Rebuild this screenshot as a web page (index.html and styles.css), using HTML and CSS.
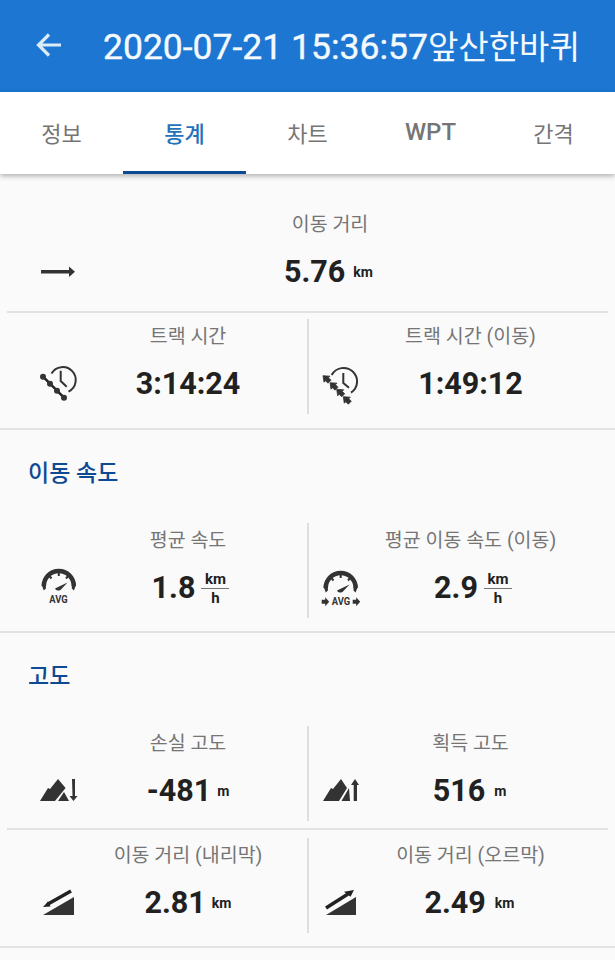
FILE: index.html
```html
<!DOCTYPE html>
<html lang="ko">
<head>
  <meta charset="UTF-8" />
  <meta name="viewport" content="width=device-width, initial-scale=1.0" />
  <title>통계</title>
  <link rel="stylesheet" href="styles.css">
</head>
<body>
  <!-- App Bar -->
  <header class="app-bar">
    <svg class="back-icon" width="30" height="30" viewBox="0 0 30 30"><path d="M27 15H5M15 4.500L4.500 15L15 25.500" fill="none" stroke="#dcebf9" stroke-width="3.200"/></svg>
    <h1>2020-07-21 15:36:57<span class="title-name">앞산한바퀴</span></h1>
  </header>

  <!-- Tabs -->
  <nav class="tabs">
    <div class="tab">정보</div>
    <div class="tab active">통계</div>
    <div class="tab">차트</div>
    <div class="tab tab-latin">WPT</div>
    <div class="tab">간격</div>
  </nav>

  <main>
    <div class="row-single">
      <div class="cell cell-wide">
        <svg class="icon" width="36" height="36" viewBox="0 0 36 36"><rect x="1" y="17" width="29" height="3.500"/><path d="M29 13.500l6 5.250-6 5.250z"/></svg>
        <div class="stat">
          <div class="label">이동 거리</div>
          <div class="value">5.76<span class="unit">km</span></div>
        </div>
      </div>
    </div>
    <div class="line inset"></div>

    <div class="row first">
      <div class="cell cell-left">
        <svg class="icon" width="36" height="36" viewBox="0 0 36 36">
          <g transform="translate(0 1)">
            <path d="M11.500 7.500A13 13 0 1 1 28.500 25.700" fill="none" stroke="#333" stroke-width="2"/>
            <path d="M20.700 4.700V15l6 5.700" fill="none" stroke="#333" stroke-width="2"/>
            <path d="M3 10.700L24 31.700" stroke="#222" stroke-width="2.500"/>
            <circle cx="3" cy="10.700" r="3"/><circle cx="10" cy="17.700" r="3"/><circle cx="17" cy="24.700" r="3"/><circle cx="24" cy="31.700" r="3"/>
          </g>
        </svg>
        <div class="stat">
          <div class="label">트랙 시간</div>
          <div class="value">3:14:24</div>
        </div>
      </div>
      <div class="cell cell-right">
        <svg class="icon" width="36" height="36" viewBox="0 0 36 36">
          <g transform="translate(0 1)">
            <path d="M8.700 9A13.500 13.500 0 1 1 28 26.700" fill="none" stroke="#333" stroke-width="2"/>
            <path d="M20.300 7V17l5.700 4.700" fill="none" stroke="#333" stroke-width="2"/>
            <g stroke="#333" stroke-width=".8">
              <path d="M0 9.700l7 .5-1.500 1.500 2.500 2.500-3 3-2.500-2.500-1.500 1.500z"/>
              <path d="M7 16.700l7 .5-1.500 1.500 2.500 2.500-3 3-2.500-2.500-1.500 1.500z"/>
              <path d="M13.700 23.300l7 .5-1.500 1.500 2.500 2.500-3 3-2.500-2.500-1.500 1.500z"/>
              <path d="M20.300 30.700l7 .5-1.500 1.500 2.500 2.500-3 3-2.500-2.500-1.500 1.500z"/>
            </g>
          </g>
        </svg>
        <div class="stat">
          <div class="label">트랙 시간 (이동)</div>
          <div class="value">1:49:12</div>
        </div>
      </div>
    </div>
    <div class="line section-end"></div>

    <h2>이동 속도</h2>
    <div class="row">
      <div class="cell cell-left">
        <svg class="icon" width="36" height="36" viewBox="0 0 36 36">
          <path d="M3.800 17A15 15 0 0 1 33.800 17" fill="none" stroke="#333" stroke-width="4.500"/>
          <path d="M1.700 16h4.200v3.500l-2.100 2zM36 16h-4.200v3.500l2.100 2z"/>
          <path d="M15 19.500l12.500-6-7 7.500q-4.500 1.500-5.500-1.500z"/>
          <path d="M18.800 3v4M9 6.500l2.500 3M28.500 6.500l-2.500 3" stroke="#333" stroke-width="2"/>
          <text class="avg" x="18.500" y="34" text-anchor="middle" textLength="18.400" lengthAdjust="spacingAndGlyphs">AVG</text>
        </svg>
        <div class="stat">
          <div class="label">평균 속도</div>
          <div class="value with-fraction">1.8<span class="fraction"><span>km</span><span class="den">h</span></span></div>
        </div>
      </div>
      <div class="cell cell-right">
        <svg class="icon" width="36" height="36" viewBox="0 0 36 36">
          <path d="M2.700 19A15 15 0 0 1 32.700 19" fill="none" stroke="#333" stroke-width="4.500"/>
          <path d="M.700 18h4.200v3.500l-2.100 2zM34.700 18h-4.200v3.500l2.100 2z"/>
          <path d="M14 21.500l12.500-6-7 7.500q-4.500 1.500-5.500-1.500z"/>
          <path d="M17.700 5v4M8 8.500l2.500 3M27.500 8.500l-2.500 3" stroke="#333" stroke-width="2"/>
          <path d="M-1.300 30.700h3.500v-2.500l4 4.500-4 4.500v-2.500h-3.500zM29.700 30.700h3.500v-2.500l4 4.500-4 4.500v-2.500h-3.500z"/>
          <text class="avg" x="18" y="36" text-anchor="middle" textLength="18.400" lengthAdjust="spacingAndGlyphs">AVG</text>
        </svg>
        <div class="stat">
          <div class="label">평균 이동 속도 (이동)</div>
          <div class="value with-fraction">2.9<span class="fraction"><span>km</span><span class="den">h</span></span></div>
        </div>
      </div>
    </div>
    <div class="line section-end"></div>

    <h2>고도</h2>
    <div class="row">
      <div class="cell cell-left">
        <svg class="icon" width="36" height="36" viewBox="0 0 36 36">
          <g transform="translate(0 2)">
            <path d="M0 27l8-13 2 1 8-10 7.600 9-10.600 13z"/>
            <path d="M18 27l6-9 5 9z"/>
            <path d="M32 5h3v17h2.500l-4 5-4-5h3z"/>
          </g>
        </svg>
        <div class="stat">
          <div class="label">손실 고도</div>
          <div class="value">-481<span class="unit">m</span></div>
        </div>
      </div>
      <div class="cell cell-right">
        <svg class="icon" width="36" height="36" viewBox="0 0 36 36">
          <g transform="translate(0 2)">
            <path d="M0 27l8-13 2 1 8-10 6 9-8 13z"/>
            <path d="M26 14l1 13h-8.500z"/>
            <path d="M30.700 27V11H28l4-6 4 6h-2v16z"/>
          </g>
        </svg>
        <div class="stat">
          <div class="label">획득 고도</div>
          <div class="value">516<span class="unit">m</span></div>
        </div>
      </div>
    </div>
    <div class="line inset split"></div>

    <div class="row">
      <div class="cell cell-left">
        <svg class="icon" width="36" height="36" viewBox="0 0 36 36">
          <path d="M3 31l31-18v18z"/>
          <path d="M31 7L8 20" fill="none" stroke="#222" stroke-width="3.500"/>
          <path d="M3 23l5-5.500 2.500 5z" fill="#222"/>
        </svg>
        <div class="stat">
          <div class="label">이동 거리 (내리막)</div>
          <div class="value">2.81<span class="unit">km</span></div>
        </div>
      </div>
      <div class="cell cell-right">
        <svg class="icon" width="36" height="36" viewBox="0 0 36 36">
          <path d="M3 31l30-18v18z"/>
          <path d="M3 24l22-14" fill="none" stroke="#222" stroke-width="3.500"/>
          <path d="M31 6l-10 1.700 6.500 5z" fill="#222"/>
        </svg>
        <div class="stat">
          <div class="label">이동 거리 (오르막)</div>
          <div class="value">2.49<span class="unit">km</span></div>
        </div>
      </div>
    </div>
    <div class="line last"></div>
  </main>
</body>
</html>
```

FILE: styles.css
```css
* {
  box-sizing: border-box;
}

html, body {
  height: 100%;
}

body {
  font-family: Roboto, "Noto Sans CJK KR", sans-serif;
  background-color: #fafafa;
  margin: 0;
  overflow: hidden;
}

.app-bar {
  height: 92px;
  background: #1d76d2;
  display: flex;
  align-items: center;
  padding: 0 0 2px 34px;
  gap: 39px;
}

.back-icon {
  flex: none;
}

.app-bar h1 {
  margin: 0;
  font-size: 35.500px;
  font-weight: 400;
  -webkit-text-stroke: 0.4px #f4f9fd;
  color: #f4f9fd;
  white-space: nowrap;
}

.title-name {
  font-size: 33px;
  -webkit-text-stroke: 0;
}

.tabs {
  height: 82px;
  background: white;
  display: flex;
  box-shadow: 0 2px 5px rgba(0, 0, 0, 0.3);
  position: relative;
}

.tab {
  flex: 1;
  display: flex;
  align-items: center;
  justify-content: center;
  padding-bottom: 2px;
  font-size: 22px;
  font-weight: 400;
  color: #757575;
}

.tab-latin {
  font-size: 24px;
  font-weight: 500;
}

.tab.active {
  color: #2472ba;
  font-weight: 500;
  border-bottom: 3px solid #0d4a94;
  padding-bottom: 0;
}

h2 {
  margin: 0;
  height: 93px;
  padding: 30px 0 0 28px;
  font-size: 23px;
  line-height: 28px;
  font-weight: 500;
  color: #0d4a94;
}

.row-single {
  height: 137px;
  padding-top: 38px;
}

.row {
  display: grid;
  grid-template-columns: 308px 307px;
  height: 95px;
}

.row.first {
  margin-top: 6px;
}

.line {
  height: 2px;
  background: #e2e2e2;
}

.line.inset {
  margin: 0 7px;
}

.line.split {
  margin-top: 7px;
  margin-bottom: 8px;
}

.line.section-end {
  margin-top: 13px;
}

.row.first + .line.section-end {
  margin-top: 14px;
}

.line.last {
  margin-top: 13px;
}

.cell {
  display: flex;
  align-items: flex-end;
  height: 100%;
}

.cell-wide {
  padding: 0 31px 0 40px;
  height: auto;
}

.cell-left {
  padding: 0 8px 20px 40px;
}

.cell-right {
  padding: 0 33px 20px 14px;
  border-left: 2px solid #dedede;
  margin-left: -1px;
}

.icon {
  flex: none;
  fill: #333;
  overflow: visible;
  margin-bottom: -7px;
}

.cell-wide .icon {
  margin-bottom: 0;
}

.stat {
  flex: 1;
  text-align: center;
  margin-bottom: -11px;
}

.cell-wide .stat {
  margin-bottom: -4px;
}

.label {
  font-size: 19.500px;
  line-height: 26px;
  color: #757575;
  margin-bottom: 13px;
}

.value {
  font-size: 30.500px;
  line-height: 42px;
  font-weight: 700;
  color: #212121;
  display: flex;
  justify-content: center;
  align-items: center;
}

.cell-wide .value {
  padding-right: 3px;
}

.value.with-fraction {
  padding-left: 5px;
}

.unit {
  font-size: 14px;
  font-weight: 700;
  margin-left: 6px;
}

.cell-wide .unit {
  margin-left: 8px;
}

.cell-right .unit {
  margin-left: 9px;
  margin-right: 2px;
}

.fraction {
  display: flex;
  flex-direction: column;
  align-items: center;
  width: 28px;
  margin-left: 6px;
  font-size: 15px;
  line-height: 18px;
}

.fraction .den {
  align-self: stretch;
  text-align: center;
  border-top: 1px solid #757575;
}

.avg {
  font-family: Roboto, sans-serif;
  font-size: 10.500px;
  font-weight: 700;
  fill: #333;
}
```
